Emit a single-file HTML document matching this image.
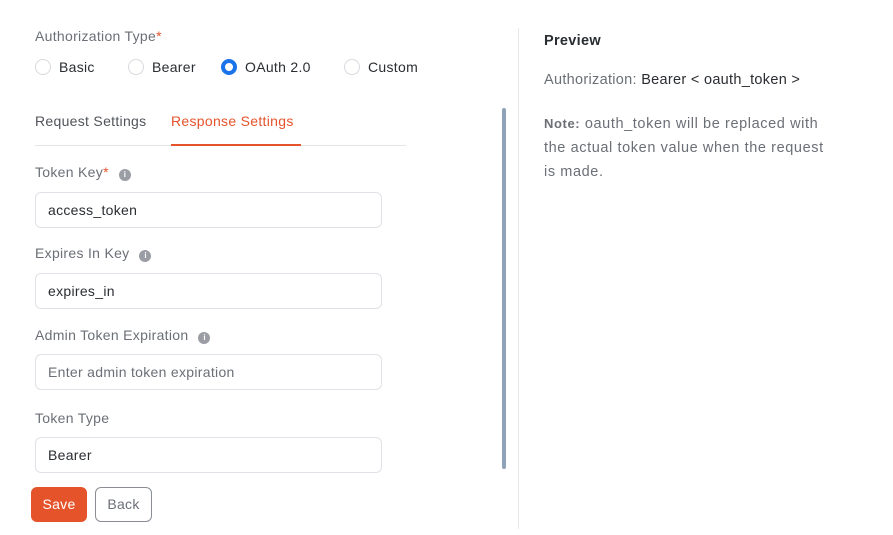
<!DOCTYPE html>
<html><head><meta charset="utf-8"><style>
*{box-sizing:border-box;margin:0;padding:0}
body{width:893px;height:535px;background:#fff;font-family:"Liberation Sans",sans-serif;font-size:14px;color:#6b6f76;position:relative;overflow:hidden;letter-spacing:0.3px}
.a{position:absolute;white-space:nowrap}
.req{color:#e5532b}
.radio{position:absolute;width:16px;height:16px;border:1px solid #d6d9dd;border-radius:50%;background:#fff}
.radio.on{border:4px solid #1a73e8}
.inp{position:absolute;left:35px;width:347px;height:36px;border:1px solid #dfe2e6;border-radius:6px;padding:0 12px;line-height:34px;color:#2a2d31;font-size:14px}
.inp.ph{color:#6b6f76}
.info{display:inline-block;width:12px;height:12px;border-radius:50%;background:#9a9ea4;color:#fff;font-size:8px;line-height:12px;text-align:center;font-weight:bold;vertical-align:0px;margin-left:10px;letter-spacing:0}
</style></head><body>
<div class="a" style="left:35px;top:28px">Authorization Type<span class="req">*</span></div>
<div class="radio" style="left:35px;top:59px"></div><div class="a" style="left:59px;top:59px;color:#2a2d31">Basic</div>
<div class="radio" style="left:128px;top:59px"></div><div class="a" style="left:152px;top:59px;color:#2a2d31">Bearer</div>
<div class="radio on" style="left:221px;top:59px"></div><div class="a" style="left:245px;top:59px;color:#2a2d31">OAuth 2.0</div>
<div class="radio" style="left:344px;top:59px"></div><div class="a" style="left:368px;top:59px;color:#2a2d31">Custom</div>

<div class="a" style="left:35px;top:113px;color:#50545a">Request Settings</div>
<div class="a" style="left:171px;top:113px;color:#e5532b">Response Settings</div>
<div class="a" style="left:35px;top:145px;width:371px;height:1px;background:#e3e5e8"></div>
<div class="a" style="left:171px;top:144px;width:130px;height:2px;background:#e5532b"></div>

<div class="a" style="left:35px;top:164px">Token Key<span class="req">*</span><span class="info">i</span></div>
<div class="inp" style="top:192px">access_token</div>
<div class="a" style="left:35px;top:245px">Expires In Key<span class="info">i</span></div>
<div class="inp" style="top:273px">expires_in</div>
<div class="a" style="left:35px;top:327px">Admin Token Expiration<span class="info">i</span></div>
<div class="inp ph" style="top:354px">Enter admin token expiration</div>
<div class="a" style="left:35px;top:410px">Token Type</div>
<div class="inp" style="top:437px">Bearer</div>

<div class="a" style="left:31px;top:487px;width:56px;height:35px;background:#e5532b;border-radius:6px;color:#fff;text-align:center;line-height:35px">Save</div>
<div class="a" style="left:95px;top:487px;width:57px;height:35px;border:1px solid #8a8e94;border-radius:6px;color:#6b6f76;text-align:center;line-height:33px">Back</div>

<div class="a" style="left:502px;top:108px;width:4px;height:361px;background:#8fa3b8;border-radius:2px"></div>
<div class="a" style="left:518px;top:28px;width:1px;height:501px;background:#e6e8eb"></div>

<div class="a" style="left:544px;top:33px;color:#2a2d31;font-weight:bold;font-size:14.5px">Preview</div>
<div class="a" style="left:544px;top:72px;font-size:14.5px">Authorization: <span style="color:#2a2d31">Bearer &lt; oauth_token &gt;</span></div>
<div class="a" style="left:544px;top:112px;font-size:14.5px;line-height:24px;letter-spacing:0.6px"><b style="font-size:13px">Note:</b> oauth_token will be replaced with<br>the actual token value when the request<br>is made.</div>
</body></html>
